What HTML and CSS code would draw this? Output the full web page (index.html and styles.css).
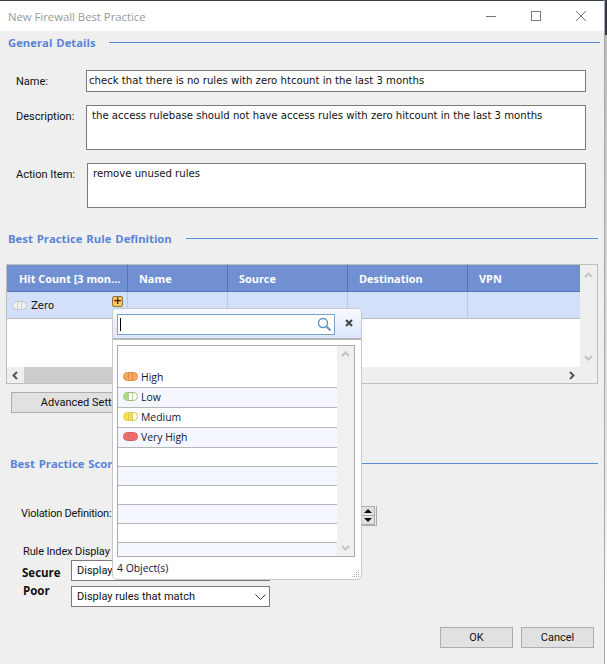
FILE: index.html
```html
<!DOCTYPE html>
<html lang="en">

<head>
    <meta charset="UTF-8">
    <meta name="viewport" content="width=device-width, initial-scale=1.0">
    <title>New Firewall Best Practice</title>
    <link rel="stylesheet" href="styles.css">
</head>

<body>
    <svg class="defs" width="0" height="0">
        <defs>
            <clipPath id="pillClip"><rect x="0.5" y="0.5" width="14" height="8" rx="4"/></clipPath>
            <symbol id="pill-zero" viewBox="0 0 15 9">
                <rect x="0.5" y="0.5" width="14" height="8" rx="4" fill="#f1f1f1" stroke="#c6c6c6"/>
                <path d="M5.5 1v7M9.5 1v7" stroke="#cfcfcf"/>
            </symbol>
            <symbol id="pill-high" viewBox="0 0 15 9">
                <rect x="0.5" y="0.5" width="14" height="8" rx="4" fill="#f6a861" stroke="#dd9045"/>
                <path d="M5.5 1v7M9.5 1v7" stroke="#dd9045"/>
            </symbol>
            <symbol id="pill-low" viewBox="0 0 15 9">
                <rect x="0.5" y="0.5" width="14" height="8" rx="4" fill="#fff" stroke="#9cbd80"/>
                <rect width="5" height="9" fill="#a9d982" clip-path="url(#pillClip)"/>
                <path d="M5.5 1v7M9.5 1v7" stroke="#b5c8a5"/>
            </symbol>
            <symbol id="pill-medium" viewBox="0 0 15 9">
                <rect x="0.5" y="0.5" width="14" height="8" rx="4" fill="#fff" stroke="#cfc045"/>
                <rect width="9" height="9" fill="#f3e04e" clip-path="url(#pillClip)"/>
                <path d="M5.5 1v7M9.5 1v7" stroke="#d8ca5a"/>
            </symbol>
            <symbol id="pill-veryhigh" viewBox="0 0 15 9">
                <rect x="0.5" y="0.5" width="14" height="8" rx="4" fill="#f26a6c" stroke="#d96062"/>
                <path d="M5.5 1v7M9.5 1v7" stroke="#dd6668"/>
            </symbol>
        </defs>
    </svg>

    <div class="window">
        <div class="titlebar">
            <span class="title">New Firewall Best Practice</span>
            <div class="win-buttons">
                <svg width="12" height="12" viewBox="0 0 12 12"><path d="M1 6.5h10" stroke="#777"/></svg>
                <svg width="12" height="12" viewBox="0 0 12 12"><rect x="1.5" y="1.5" width="9" height="9" fill="none" stroke="#777"/></svg>
                <svg width="12" height="12" viewBox="0 0 12 12"><path d="M1 1l10 10M11 1L1 11" stroke="#777"/></svg>
            </div>
        </div>

        <div class="content">
            <div class="section-head general"><span>General Details</span><i></i></div>

            <div class="form-row name-row">
                <label>Name:</label>
                <div class="field field-name">check that there is no rules with zero htcount in the last 3 months</div>
            </div>
            <div class="form-row desc-row">
                <label>Description:</label>
                <div class="field field-area">the access rulebase should not have access rules with zero hitcount in the last 3 months</div>
            </div>
            <div class="form-row action-row">
                <label>Action Item:</label>
                <div class="field field-area action-field">remove unused rules</div>
            </div>

            <div class="section-head rule"><span>Best Practice Rule Definition</span><i></i></div>

            <div class="grid">
                <div class="grid-main">
                    <div class="grid-view">
                        <div class="grid-row grid-header">
                            <div class="col col-hit">Hit Count [3 mon...</div>
                            <div class="col col-name">Name</div>
                            <div class="col col-source">Source</div>
                            <div class="col col-dest">Destination</div>
                            <div class="col col-vpn">VPN</div>
                        </div>
                        <div class="grid-row grid-data">
                            <div class="col col-hit">
                                <svg class="pill" width="15" height="9"><use href="#pill-zero"/></svg>
                                <span>Zero</span>
                                <span class="add-btn">+</span>
                            </div>
                            <div class="col col-name"></div>
                            <div class="col col-source"></div>
                            <div class="col col-dest"></div>
                            <div class="col col-vpn"></div>
                        </div>
                    </div>
                    <div class="vscroll">
                        <svg width="9" height="6" viewBox="0 0 9 6"><path d="M1 5l3.5-3.5L8 5" fill="none" stroke="#c4c4c4" stroke-width="2"/></svg>
                        <svg width="9" height="6" viewBox="0 0 9 6"><path d="M1 1l3.5 3.5L8 1" fill="none" stroke="#c4c4c4" stroke-width="2"/></svg>
                    </div>
                </div>
                <div class="hscroll">
                    <svg width="6" height="9" viewBox="0 0 6 9"><path d="M5 1L1.5 4.5 5 8" fill="none" stroke="#555" stroke-width="2"/></svg>
                    <div class="hthumb"></div>
                    <svg width="6" height="9" viewBox="0 0 6 9"><path d="M1 1l3.5 3.5L1 8" fill="none" stroke="#555" stroke-width="2"/></svg>
                </div>
            </div>

            <button class="btn advanced">Advanced Settings</button>

            <div class="section-head score"><span>Best Practice Scoring</span><i></i></div>

            <div class="violation">
                <label>Violation Definition:</label>
                <div class="spinner">
                    <span class="up"></span>
                    <span class="down"></span>
                </div>
            </div>

            <div class="index-label">Rule Index Display</div>
            <div class="score-row secure">
                <b>Secure</b>
                <div class="select">
                    <span>Display rules that match</span>
                    <svg width="11" height="6" viewBox="0 0 11 6"><path d="M.5 .5l5 5 5-5" fill="none" stroke="#333"/></svg>
                </div>
            </div>
            <div class="score-row poor">
                <b>Poor</b>
                <div class="select">
                    <span>Display rules that match</span>
                    <svg width="11" height="6" viewBox="0 0 11 6"><path d="M.5 .5l5 5 5-5" fill="none" stroke="#333"/></svg>
                </div>
            </div>

            <div class="actions">
                <button class="btn">OK</button>
                <button class="btn">Cancel</button>
            </div>
        </div>
    </div>
    <div class="edge"></div>

    <!-- object picker opened from the + button -->
    <div class="picker">
        <div class="picker-head">
            <div class="search">
                <span class="caret"></span>
                <svg width="15" height="15" viewBox="0 0 15 15"><circle cx="6" cy="6" r="4.5" fill="none" stroke="#5f93c9" stroke-width="1.4"/><path d="M9.5 9.5l4 4" stroke="#5f93c9" stroke-width="2"/></svg>
            </div>
            <svg class="picker-close" width="8" height="8" viewBox="0 0 8 8"><path d="M1 1l6 6M7 1L1 7" stroke="#444" stroke-width="2"/></svg>
        </div>
        <div class="picker-list">
            <div class="rows">
                <div class="item first"></div>
                <div class="item"><svg class="pill" width="15" height="9"><use href="#pill-high"/></svg>High</div>
                <div class="item alt"><svg class="pill" width="15" height="9"><use href="#pill-low"/></svg>Low</div>
                <div class="item"><svg class="pill" width="15" height="9"><use href="#pill-medium"/></svg>Medium</div>
                <div class="item alt"><svg class="pill" width="15" height="9"><use href="#pill-veryhigh"/></svg>Very High</div>
                <div class="item empty"></div>
                <div class="item empty alt"></div>
                <div class="item empty"></div>
                <div class="item empty alt"></div>
                <div class="item empty"></div>
                <div class="item last alt"></div>
            </div>
            <div class="list-scroll">
                <svg width="9" height="6" viewBox="0 0 9 6"><path d="M1 5l3.5-3.5L8 5" fill="none" stroke="#c4c4c4" stroke-width="2"/></svg>
                <svg width="9" height="6" viewBox="0 0 9 6"><path d="M1 1l3.5 3.5L8 1" fill="none" stroke="#c4c4c4" stroke-width="2"/></svg>
            </div>
        </div>
        <div class="picker-foot">4 Object(s)</div>
        <svg class="grip" width="9" height="9" viewBox="0 0 9 9"><path d="M7 1h1v1H7zM5 3h1v1H5zM7 3h1v1H7zM3 5h1v1H3zM5 5h1v1H5zM7 5h1v1H7zM1 7h1v1H1zM3 7h1v1H3zM5 7h1v1H5zM7 7h1v1H7z" fill="#b5b5b5"/></svg>
    </div>
</body>

</html>
```

FILE: styles.css
```css
* {
    box-sizing: border-box;
}

html,
body {
    height: 100%;
}

body {
    margin: 0;
    background: #fff;
    font-family: Roboto, 'Liberation Sans', sans-serif;
    font-size: 11px;
    color: #111;
    overflow: hidden;
    position: relative;
    display: flex;
}

.defs {
    position: absolute;
}

.window {
    width: 604px;
    height: 100%;
    flex: none;
    background: #efefef;
    border-top: 1px solid #3a3f46;
}

.edge {
    flex: 1;
    background: linear-gradient(#2f3742 35px, #b9b9b9 35px, #c4c4c4 120px, #e9e9e9 500px, #fff 600px);
    border-left: 1px solid #a9a9a9;
}

.titlebar {
    height: 30px;
    background: #fff;
    display: flex;
    align-items: center;
    justify-content: space-between;
    padding: 0 17px 0 8px;
}

.title {
    color: #999;
    font-family: 'Open Sans', sans-serif;
    font-size: 11.3px;
}

.win-buttons {
    display: flex;
    gap: 33px;
}

.content {
    padding-top: 3px;
}

/* section headings */
.section-head {
    display: flex;
    align-items: center;
    color: #5b84d6;
    font-family: 'Open Sans', sans-serif;
    font-weight: 700;
    font-size: 11.3px;
    word-spacing: 1px;
    height: 16px;
}

.section-head span {
    white-space: nowrap;
}

.section-head i {
    display: block;
    height: 1px;
    background: #5b87d6;
}

.general {
    padding-left: 8px;
}

.general span {
    width: 101px;
}

.general i {
    width: 491px;
}

.rule {
    margin-top: 22px;
    padding-left: 8px;
}

.rule span {
    width: 178px;
}

.rule i {
    width: 412px;
}

.score {
    margin-top: 42px;
    padding-left: 10px;
}

.score span {
    width: 160px;
}

.score i {
    width: 428px;
}

/* form */
.form-row {
    display: flex;
    padding-left: 16px;
}

.form-row label {
    width: 70px;
}

.name-row {
    margin-top: 20px;
    align-items: center;
}

.desc-row {
    margin-top: 13px;
}

.desc-row label {
    padding-top: 5px;
}

.action-row {
    margin-top: 13px;
}

.action-row label {
    width: 71px;
    padding-top: 5px;
}

.field {
    background: #fff;
    border: 1px solid #7a7a7a;
    font-family: 'DejaVu Sans', sans-serif;
    font-size: 10.15px;
    color: #111;
}

.field-name {
    width: 500px;
    height: 22px;
    line-height: 20px;
    padding-left: 2px;
}

.field-area {
    width: 500px;
    height: 45px;
    padding: 4px 0 0 5px;
}

.action-field {
    width: 499px;
}

/* rule grid */
.grid {
    margin: 18px 0 0 6px;
    width: 592px;
    height: 120px;
    background: #fff;
    border: 1px solid #bdbdbd;
    display: flex;
    flex-direction: column;
}

.grid-main {
    display: flex;
    height: 102px;
}

.grid-view {
    width: 573px;
}

.grid-row {
    display: flex;
}

.col {
    flex: none;
    display: flex;
    align-items: center;
}

.col-hit {
    width: 121px;
}

.col-name {
    width: 100px;
}

.col-source {
    width: 120px;
}

.col-dest {
    width: 120px;
}

.col-vpn {
    width: 112px;
}

.grid-header {
    height: 27px;
    background: #7090d2;
    color: #fff;
    font-family: 'Open Sans', sans-serif;
    font-weight: 700;
    font-size: 10.9px;
    white-space: nowrap;
    border-bottom: 1px solid #5472b4;
}

.grid-header .col {
    padding-left: 11px;
    border-right: 1px solid #5472b4;
}

.grid-header .col-hit {
    padding-left: 12px;
}

.grid-header .col-vpn {
    border-right: none;
}

.grid-data {
    height: 27px;
    background: #d2e1f9;
    border-bottom: 1px solid #bdbdbd;
}

.grid-data .col {
    border-right: 1px solid #bdc8d8;
}

.grid-data .col-vpn {
    border-right: none;
}

.grid-data .col-hit {
    position: relative;
    padding-left: 5px;
    gap: 4px;
    font-family: 'DejaVu Sans', sans-serif;
    font-size: 10px;
}

.add-btn {
    position: absolute;
    left: 105px;
    top: 4px;
    width: 11px;
    height: 11px;
    background: #fdc95a;
    border: 1px solid #8a7440;
    border-radius: 2px;
    color: #5a1a10;
    font-size: 11px;
    font-weight: 700;
    line-height: 8px;
    text-align: center;
}

.vscroll {
    width: 17px;
    padding: 7px 0 6px;
    background: #efefef;
    display: flex;
    flex-direction: column;
    align-items: center;
    justify-content: space-between;
}

.hscroll {
    height: 16px;
    background: #efefef;
    display: flex;
    align-items: center;
    padding: 0 5px;
}

.hthumb {
    height: 16px;
    width: 300px;
    margin-left: 6px;
    background: #cdcdcd;
}

.hscroll svg:last-child {
    margin-left: auto;
    margin-right: 17px;
}

/* buttons */
.btn {
    font: inherit;
    color: #111;
    background: #e1e1e1;
    border: 1px solid #adadad;
    padding: 0;
}

.advanced {
    display: block;
    margin: 8px 0 0 11px;
    width: 151px;
    height: 21px;
}

.violation {
    margin-top: 35px;
    padding-left: 21px;
    display: flex;
    height: 20px;
}

.violation label {
    width: 339px;
    padding-top: 1px;
    letter-spacing: -0.25px;
}

.spinner {
    width: 17px;
    height: 20px;
    border-right: 1px solid #adadad;
    border-bottom: 1px solid #adadad;
    padding-right: 1px;
    display: flex;
    flex-direction: column;
}

.spinner span {
    flex: 1;
    background: #e1e1e1;
    border: 1px solid #adadad;
    display: flex;
    align-items: center;
    justify-content: center;
}

.spinner .down {
    border-top: none;
}

.spinner span::before {
    content: "";
    border-left: 4px solid transparent;
    border-right: 4px solid transparent;
}

.spinner .up::before {
    border-bottom: 4px solid #111;
}

.spinner .down::before {
    border-top: 4px solid #111;
}

.index-label {
    margin-top: 19px;
    padding-left: 23px;
    height: 14px;
    letter-spacing: -0.12px;
}

.score-row {
    display: flex;
    padding-left: 22px;
    height: 21px;
    align-items: center;
}

.score-row b {
    width: 49px;
    font-family: 'Open Sans', sans-serif;
    font-size: 11.5px;
}

.secure {
    margin-top: 1px;
}

.secure b {
    margin-top: 3px;
}

.poor {
    margin-top: 5px;
}

.poor b {
    margin-left: 1px;
    width: 48px;
    margin-top: -13px;
}

.select {
    width: 199px;
    height: 21px;
    background: #fff;
    border: 1px solid #7a7a7a;
    display: flex;
    align-items: center;
    justify-content: space-between;
    padding: 0 3px 0 5px;
}

.actions {
    display: flex;
    justify-content: flex-end;
    gap: 8px;
    margin: 20px 10px 0 0;
}

.actions .btn {
    width: 73px;
    height: 21px;
}

/* picker popup */
.picker {
    position: absolute;
    left: 112px;
    top: 308px;
    width: 250px;
    height: 272px;
    background: #fff;
    border: 1px solid #c8c8c8;
    border-radius: 5px;
    display: flex;
    flex-direction: column;
}

.picker-head {
    height: 31px;
    padding: 5px 0 0 4px;
    background: linear-gradient(#f8faff, #dbe6fd);
    border-bottom: 2px solid #b9b9b9;
    border-radius: 4px 4px 0 0;
    display: flex;
    align-items: flex-start;
}

.search {
    width: 218px;
    height: 21px;
    background: #fff;
    border: 1px solid #7aa2c6;
    display: flex;
    align-items: center;
    justify-content: space-between;
    padding: 0 2px;
}

.caret {
    width: 1px;
    height: 13px;
    background: #000;
}

.picker-close {
    margin: 5px 0 0 10px;
}

.picker-list {
    margin: 5px 7px 0 4px;
    width: 238px;
    height: 212px;
    border: 1px solid #aaa;
    display: flex;
}

.rows {
    width: 219px;
}

.item {
    height: 20px;
    border-bottom: 1px solid #b5b5b5;
    display: flex;
    align-items: center;
    padding: 0 0 2px 5px;
    gap: 3px;
    font-size: 10.4px;
    font-family: 'Open Sans', sans-serif;
    color: #14143c;
}

.item.first {
    height: 22px;
    border-bottom: none;
}

.item.empty {
    height: 19px;
}

.item.last {
    height: 13px;
    border-bottom: none;
}

.item.alt {
    background: #f4f8fe;
}

.list-scroll {
    width: 17px;
    background: #f0f0f0;
    padding: 5px 0;
    display: flex;
    flex-direction: column;
    align-items: center;
    justify-content: space-between;
}

.picker-foot {
    padding: 4px 0 0 4px;
    font-size: 10.4px;
    font-family: 'Open Sans', sans-serif;
    color: #14143c;
}

.grip {
    position: absolute;
    right: 1px;
    bottom: 1px;
}

.pill {
    flex: none;
}
```
